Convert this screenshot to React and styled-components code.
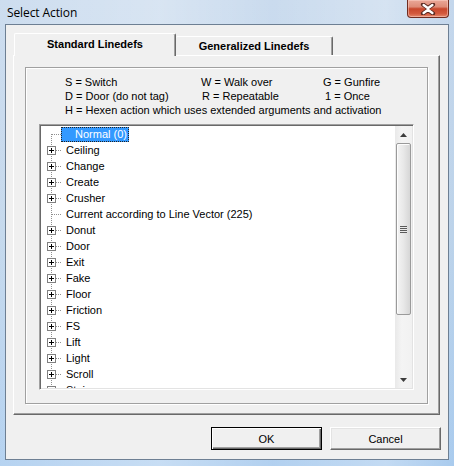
import React from 'react';
import styled, { createGlobalStyle, css } from 'styled-components';

const uiFont = `"Liberation Sans", Arial, sans-serif`;

const Global = createGlobalStyle`
  html, body {
    margin: 0;
    padding: 0;
    background: #b9d1ea;
  }
  * { box-sizing: border-box; }
`;

const Window = styled.div`
  width: 454px;
  height: 466px;
  display: flex;
  flex-direction: column;
  padding: 0 5px 6px 5px;
  background:
    linear-gradient(to right, rgba(255,255,255,0.15), rgba(255,255,255,0.35) 35%, rgba(255,255,255,0.1) 60%, rgba(255,255,255,0.3) 85%, rgba(0,0,0,0)),
    linear-gradient(to bottom, #c4d7ec 0%, #bcd3ea 50%, #a9cbee 100%);
`;

const TitleBar = styled.div`
  height: 24px;
  display: flex;
  align-items: flex-start;
  justify-content: space-between;
`;

const Title = styled.div`
  font-family: "Open Sans", "Noto Sans", sans-serif;
  font-size: 12px;
  color: #000;
  padding: 4px 0 0 2px;
  letter-spacing: -0.1px;
`;

const CloseBtn = styled.div`
  width: 42px;
  height: 18px;
  border: 1px solid #6f2c20;
  border-top: none;
  border-radius: 0 0 4px 4px;
  background: linear-gradient(to bottom, #eaa898 0%, #de8c78 40%, #c8472c 52%, #d35a3e 80%, #e5896c 100%);
  box-shadow: inset 0 0 0 1px rgba(255, 220, 210, 0.45);
  display: flex;
  align-items: center;
  justify-content: center;
`;

const Client = styled.div`
  flex: 1;
  display: flex;
  flex-direction: column;
  background: #f0f0f0;
  border: 1px solid #6d7f93;
  padding: 8px 7px 9px 7px;
`;

const TabStrip = styled.div`
  display: flex;
  align-items: flex-end;
  height: 22px;
  padding-left: 1px;
  position: relative;
  z-index: 1;
`;

const Tab = styled.div`
  font-family: ${uiFont};
  font-size: 11px;
  font-weight: bold;
  color: #000;
  background: #f0f0f0;
  display: flex;
  justify-content: center;
  border-top: 1px solid #fff;
  border-left: 1px solid #fff;
  border-right: 1px solid #696969;
  box-shadow: inset -1px 0 #a0a0a0;
  border-radius: 2px 2px 0 0;
  ${p => p.$active ? css`
    width: 162px;
    height: 23px;
    margin-bottom: -1px;
    padding-top: 4px;
  ` : css`
    width: 157px;
    height: 19px;
    border-left: none;
    padding-top: 3px;
  `}
`;

const TabPanel = styled.div`
  height: 360px;
  width: 427px;
  display: flex;
  border-top: 1px solid #fff;
  border-left: 1px solid #fff;
  border-right: 1px solid #696969;
  border-bottom: 1px solid #696969;
  box-shadow: inset -1px -1px #a0a0a0;
  padding: 11px 11px 10px 11px;
`;

const GroupBox = styled.div`
  flex: 1;
  display: flex;
  flex-direction: column;
  border: 1px solid #a0a0a0;
  box-shadow: inset 1px 1px #fff, 1px 1px #fff;
  padding: 7px 13px 13px 13px;
`;

const Legend = styled.div`
  display: grid;
  grid-template-columns: 136px 122px auto;
  grid-auto-rows: 14px;
  padding-left: 26px;
  font-family: ${uiFont};
  font-size: 11px;
  color: #000;
  line-height: 14px;
`;

const LegendCell = styled.div`
  white-space: nowrap;
  padding-left: ${p => p.$shift || 0}px;
  ${p => p.$wide && css`grid-column: 1 / 4;`}
`;

const TreeBox = styled.div`
  margin-top: 7px;
  flex: 1;
  display: flex;
  background: #fff;
  border-top: 1px solid #a0a0a0;
  border-left: 1px solid #a0a0a0;
  border-right: 1px solid #fff;
  border-bottom: 1px solid #fff;
  box-shadow: inset 1px 1px #696969, inset -1px -1px #e3e3e3;
  padding: 1px;
  overflow: hidden;
`;

const TreeList = styled.div`
  flex: 1;
  overflow: hidden;
  display: flex;
  flex-direction: column;
`;

const Row = styled.div`
  height: 16px;
  flex: none;
  display: flex;
  align-items: center;
`;

const Gutter = styled.svg`
  flex: none;
  width: 20px;
  height: 16px;
  display: block;
`;

const Label = styled.div`
  font-family: ${uiFont};
  font-size: 11px;
  line-height: 13px;
  height: 15px;
  white-space: nowrap;
  color: #000;
  padding: 1px 4px 0 5px;
  ${p => p.$selected && css`
    background: #3399ff;
    color: #fff;
    outline: 1px dotted #222;
    outline-offset: -1px;
    padding-left: 14px;
    padding-right: 2px;
  `}
`;

const ScrollBar = styled.div`
  width: 17px;
  flex: none;
  display: flex;
  flex-direction: column;
  background: linear-gradient(to right, #e9e9e9, #f4f4f4 40%, #f1f1f1);
`;

const Arrow = styled.div`
  height: 17px;
  flex: none;
  display: flex;
  align-items: center;
  justify-content: center;
`;

const Track = styled.div`
  flex: 1;
  display: flex;
  flex-direction: column;
  padding: 0 1px;
`;

const Thumb = styled.div`
  height: 172px;
  border: 1px solid #9a9a9a;
  border-radius: 2px;
  background: linear-gradient(to right, #f4f4f4, #e8e8e8 50%, #d6d6d6);
  box-shadow: inset 1px 1px #fdfdfd;
  display: flex;
  align-items: center;
  justify-content: center;
`;

const Grip = styled.div`
  width: 7px;
  height: 7px;
  background: repeating-linear-gradient(to bottom, #5a5a5a 0 1px, #eaeaea 1px 2px);
`;

const ButtonRow = styled.div`
  display: flex;
  justify-content: flex-end;
  gap: 8px;
  margin-top: 12px;
`;

const Button = styled.div`
  width: 111px;
  height: 23px;
  display: flex;
  align-items: center;
  justify-content: center;
  font-family: ${uiFont};
  font-size: 11px;
  color: #000;
  background: #f0f0f0;
  border-top: 1px solid #fff;
  border-left: 1px solid #fff;
  border-right: 1px solid #696969;
  border-bottom: 1px solid #696969;
  box-shadow: inset -1px -1px #a0a0a0, inset 1px 1px #e3e3e3;
  ${p => p.$default && css`
    border: 1px solid #000;
    box-shadow: inset 1px 1px #fff, inset -1px -1px #696969, inset -2px -2px #a0a0a0;
  `}
`;

const items = [
  { name: 'Normal (0)', leaf: true, selected: true, first: true },
  { name: 'Ceiling' },
  { name: 'Change' },
  { name: 'Create' },
  { name: 'Crusher' },
  { name: 'Current according to Line Vector (225)', leaf: true },
  { name: 'Donut' },
  { name: 'Door' },
  { name: 'Exit' },
  { name: 'Fake' },
  { name: 'Floor' },
  { name: 'Friction' },
  { name: 'FS' },
  { name: 'Lift' },
  { name: 'Light' },
  { name: 'Scroll' },
  { name: 'Stairs' },
  { name: 'Teleport' },
];

const dots = { stroke: '#909090', strokeWidth: 1, strokeDasharray: '1 1', shapeRendering: 'crispEdges' };

const TreeGlyph = ({ leaf, first }) => (
  <Gutter viewBox="0 0 20 16">
    <line x1="10.5" y1={first ? 8 : 0} x2="10.5" y2="16" {...dots} />
    <line x1={leaf ? 11 : 15} y1="8.5" x2="20" y2="8.5" {...dots} />
    {!leaf && (
      <g shapeRendering="crispEdges">
        <rect x="6.5" y="4.5" width="8" height="8" fill="#fff" stroke="#808080" />
        <line x1="8" y1="8.5" x2="13" y2="8.5" stroke="#000" />
        <line x1="10.5" y1="6" x2="10.5" y2="11" stroke="#000" />
      </g>
    )}
  </Gutter>
);

const App = () => (
  <>
    <Global />
    <Window>
      <TitleBar>
        <Title>Select Action</Title>
        <CloseBtn>
          <svg width="16" height="12" viewBox="0 0 16 12">
            <path d="M3 1.5 L8 5 L13 1.5 M3 10.5 L8 7 L13 10.5" fill="none" stroke="#5a2a22" strokeWidth="4.2" strokeLinecap="round" />
            <path d="M3.6 2 L8 5.2 L12.4 2 M3.6 10 L8 6.8 L12.4 10" fill="none" stroke="#fff" strokeWidth="2.4" strokeLinecap="round" />
          </svg>
        </CloseBtn>
      </TitleBar>
      <Client>
        <TabStrip>
          <Tab $active>Standard Linedefs</Tab>
          <Tab>Generalized Linedefs</Tab>
        </TabStrip>
        <TabPanel>
          <GroupBox>
            <Legend>
              <LegendCell>S = Switch</LegendCell>
              <LegendCell>W = Walk over</LegendCell>
              <LegendCell>G = Gunfire</LegendCell>
              <LegendCell>D = Door (do not tag)</LegendCell>
              <LegendCell $shift={1}>R = Repeatable</LegendCell>
              <LegendCell $shift={2}>1 = Once</LegendCell>
              <LegendCell $wide>H = Hexen action which uses extended arguments and activation</LegendCell>
            </Legend>
            <TreeBox>
              <TreeList>
                {items.map(it => (
                  <Row key={it.name}>
                    <TreeGlyph leaf={it.leaf} first={it.first} />
                    <Label $selected={it.selected}>{it.name}</Label>
                  </Row>
                ))}
              </TreeList>
              <ScrollBar>
                <Arrow>
                  <svg width="7" height="4" viewBox="0 0 7 4"><path d="M0 4 L3.5 0 L7 4 Z" fill="#3c3c3c" /></svg>
                </Arrow>
                <Track>
                  <Thumb><Grip /></Thumb>
                </Track>
                <Arrow>
                  <svg width="7" height="4" viewBox="0 0 7 4"><path d="M0 0 L3.5 4 L7 0 Z" fill="#3c3c3c" /></svg>
                </Arrow>
              </ScrollBar>
            </TreeBox>
          </GroupBox>
        </TabPanel>
        <ButtonRow>
          <Button $default>OK</Button>
          <Button>Cancel</Button>
        </ButtonRow>
      </Client>
    </Window>
  </>
);

export default App;
